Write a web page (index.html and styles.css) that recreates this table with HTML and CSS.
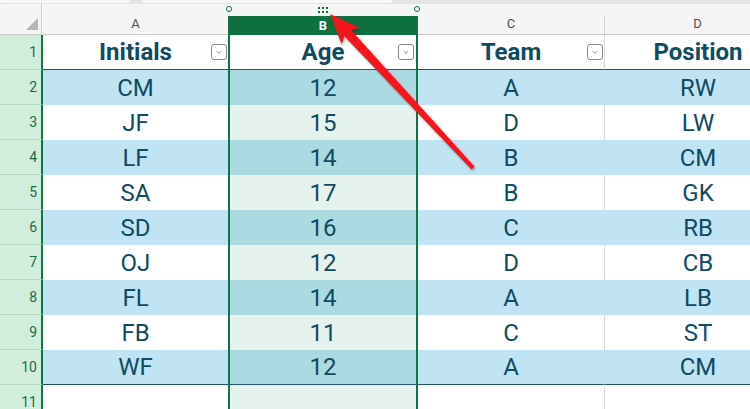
FILE: index.html
```html
<!DOCTYPE html>
<html>
<head>
<meta charset="utf-8">
<link rel="stylesheet" href="styles.css">
</head>
<body>
<div class="app">
  <div class="topstrip"><span class="pill p1"></span><span class="pill p2"></span></div>
  <div class="sheet">
    <div class="corner"><span class="tri"></span></div>
    <div class="colhdr">A</div>
    <div class="colhdr selhdr">
      <span class="handle hl"></span><span class="handle hr"></span>
      <span class="grip"><i></i><i></i><i></i><i></i><i></i><i></i></span>
      <span class="selbar">B</span>
    </div>
    <div class="colhdr">C</div>
    <div class="colhdr gl">D</div>

    <div class="rh">1</div>
    <div class="c th">Initials<span class="fb"><svg viewBox="0 0 16 16"><path d="M5.5 7l2.5 2.5L10.5 7" fill="none" stroke="#777" stroke-width="1"/></svg></span></div>
    <div class="c th sel">Age<span class="fb"><svg viewBox="0 0 16 16"><path d="M5.5 7l2.5 2.5L10.5 7" fill="none" stroke="#777" stroke-width="1"/></svg></span></div>
    <div class="c th">Team<span class="fb"><svg viewBox="0 0 16 16"><path d="M5.5 7l2.5 2.5L10.5 7" fill="none" stroke="#777" stroke-width="1"/></svg></span></div>
    <div class="c th gl">Position</div>

    <div class="rh">2</div><div class="c b">CM</div><div class="c b sel">12</div><div class="c b">A</div><div class="c b gl">RW</div>
    <div class="rh">3</div><div class="c">JF</div><div class="c sel">15</div><div class="c">D</div><div class="c gl">LW</div>
    <div class="rh">4</div><div class="c b">LF</div><div class="c b sel">14</div><div class="c b">B</div><div class="c b gl">CM</div>
    <div class="rh">5</div><div class="c">SA</div><div class="c sel">17</div><div class="c">B</div><div class="c gl">GK</div>
    <div class="rh">6</div><div class="c b">SD</div><div class="c b sel">16</div><div class="c b">C</div><div class="c b gl">RB</div>
    <div class="rh">7</div><div class="c">OJ</div><div class="c sel">12</div><div class="c">D</div><div class="c gl">CB</div>
    <div class="rh">8</div><div class="c b">FL</div><div class="c b sel">14</div><div class="c b">A</div><div class="c b gl">LB</div>
    <div class="rh">9</div><div class="c">FB</div><div class="c sel">11</div><div class="c">C</div><div class="c gl">ST</div>
    <div class="rh">10</div><div class="c b last">WF</div><div class="c b sel last">12</div><div class="c b last">A</div><div class="c b gl last">CM</div>
    <div class="rh">11</div><div class="c e"></div><div class="c e sel"></div><div class="c e"></div><div class="c e gl"></div>
  </div>
  <svg class="arrow" width="750" height="409" viewBox="0 0 750 409">
    <defs>
      <filter id="sh" x="-20%" y="-20%" width="140%" height="140%">
        <feDropShadow dx="1" dy="1.5" stdDeviation="1.2" flood-color="#000" flood-opacity="0.35"/>
      </filter>
    </defs>
    <polygon points="330,14 359.2,27.8 351,30 474.5,166.6 471.5,169.4 344.4,36.2 341.6,44.2" fill="#f4161a" filter="url(#sh)"/>
  </svg>
</div>
</body>
</html>
```
FILE: styles.css
```css
* { box-sizing: border-box; }
html, body { margin: 0; padding: 0; background: #fff; overflow: hidden; }
.app {
  position: relative;
  width: 750px;
  height: 409px;
  overflow: hidden;
  font-family: Roboto, "Liberation Sans", sans-serif;
}
.topstrip {
  height: 4px;
  background: #e4e4e4;
  position: relative;
}
.pill {
  position: absolute;
  top: 0;
  height: 3px;
  background: #f7f7f7;
  border-radius: 0 0 3px 3px;
}
.p1 { left: 0; width: 130px; }
.p2 { left: 142px; width: 250px; }
.sheet {
  display: grid;
  grid-template-columns: 43px 185px 190px 186px 187px;
  grid-template-rows: 31px repeat(11, 35px);
  width: 791px;
}
.corner {
  background: #f5f5f5;
  border-right: 1px solid #c9c9c9;
  border-bottom: 1px solid #c9c9c9;
  margin-right: 1px;
  position: relative;
}
.tri {
  position: absolute;
  right: 3px;
  bottom: 4px;
  width: 0;
  height: 0;
  border-left: 12px solid transparent;
  border-bottom: 12px solid #b5b5b5;
}
.colhdr {
  position: relative;
  background: #f5f5f5;
  border-bottom: 1px solid #c9c9c9;
  color: #505050;
  font-size: 13px;
  display: flex;
  align-items: flex-end;
  justify-content: center;
  padding-bottom: 3px;
}
.colhdr.gl::before {
  content: "";
  position: absolute;
  left: 0;
  top: 12px;
  bottom: 0;
  width: 1px;
  background: #d4d4d4;
}
.selhdr {
  padding: 12px 0 0 0;
  align-items: stretch;
  border-bottom: 0;
  z-index: 2;
}
.selbar {
  flex: 1;
  background: #0e703e;
  color: #fff;
  font-weight: bold;
  font-size: 13px;
  display: flex;
  align-items: center;
  justify-content: center;
}
.handle {
  position: absolute;
  top: 2px;
  width: 6px;
  height: 6px;
  border: 1.3px solid #0e703e;
  border-radius: 50%;
  background: #fff;
  z-index: 3;
}
.hl { left: -2px; }
.hr { right: -2px; }
.grip {
  position: absolute;
  top: 3px;
  left: 90px;
  width: 10px;
  display: grid;
  grid-template-columns: repeat(3, 2px);
  gap: 2px;
}
.grip i { display: block; width: 2px; height: 2px; background: #0e703e; }

.rh {
  background: #d1eedd;
  border-right: 2px solid #137443;
  border-bottom: 1px solid #b6d9c4;
  color: #1d6c43;
  font-size: 14px;
  display: flex;
  align-items: center;
  justify-content: flex-end;
  padding-right: 4px;
}
.c {
  position: relative;
  display: flex;
  align-items: center;
  justify-content: center;
  font-size: 24px;
  color: #0f4b61;
  background: #fff;
}
.c.b { background: #c0e4f4; }
.c.sel {
  border-left: 2px solid #137443;
  border-right: 2px solid #137443;
  background: #e6f2ee;
}
.c.b.sel { background: #abdae3; }
.c.gl { border-left: 1px solid #d9d9d9; }
.c.b.gl { border-left-color: transparent; }
.th {
  font-weight: bold;
  border-bottom: 1px solid #1f5668;
}
.th.sel { background: #fff; }
.c.last { border-bottom: 1px solid #1f5668; }
.fb {
  position: absolute;
  right: 1px;
  top: 9px;
  width: 16px;
  height: 16px;
  border: 1px solid #8a8a8a;
  border-radius: 3px;
  background: #fff;
  display: flex;
}
.fb svg { width: 14px; height: 14px; }
.sel .fb { right: 2px; }
.arrow {
  position: absolute;
  left: 0;
  top: 0;
  pointer-events: none;
  z-index: 5;
}
```
